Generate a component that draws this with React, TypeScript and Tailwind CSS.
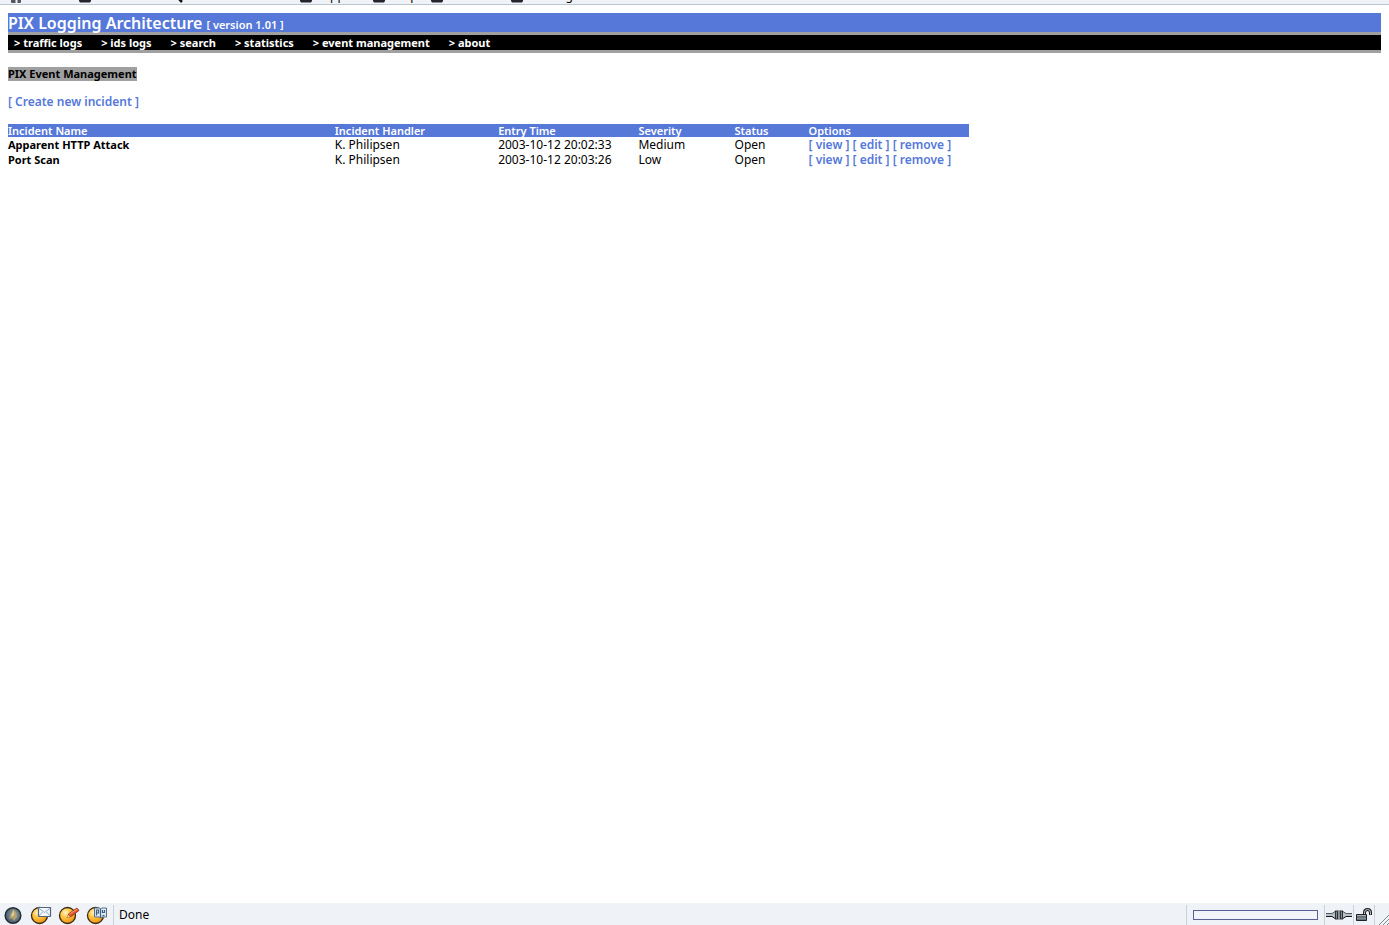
import { ReactNode } from 'react';

const bookmarks = [
  { label: 'Home', width: 'w-[69px]', icon: 'home' },
  { label: 'Bookmarks', width: 'w-[95px]', icon: 'folder' },
  { label: 'Red Hat Network', width: 'w-[126px]', icon: 'search' },
  { label: 'Support', width: 'w-[73px]', icon: 'folder' },
  { label: 'Shop', width: 'w-[58px]', icon: 'folder' },
  { label: 'Products', width: 'w-[80px]', icon: 'folder' },
  { label: 'Training', width: 'w-[80px]', icon: 'folder' },
];

const menu = ['traffic logs', 'ids logs', 'search', 'statistics', 'event management', 'about'];

const columns = [
  { name: 'Incident Name', width: 'w-[34%]' },
  { name: 'Incident Handler', width: 'w-[17%]' },
  { name: 'Entry Time', width: 'w-[14.6%]' },
  { name: 'Severity', width: 'w-[10%]' },
  { name: 'Status', width: 'w-[7.7%]' },
  { name: 'Options', width: '' },
];

const incidents = [
  { name: 'Apparent HTTP Attack', handler: 'K. Philipsen', time: '2003-10-12 20:02:33', severity: 'Medium', status: 'Open' },
  { name: 'Port Scan', handler: 'K. Philipsen', time: '2003-10-12 20:03:26', severity: 'Low', status: 'Open' },
];

function BookmarkIcon({ kind }: { kind: string }) {
  return (
    <svg viewBox="0 0 16 16" className="w-4 h-4 shrink-0" aria-hidden="true">
      {kind === 'home' && <path d="M1 9 8 2l7 7h-2v5.500l-1 .5H9.500V12h-2v3H4l-1-.5V9z" fill="#555564" />}
      {kind === 'search' && (
        <>
          <circle cx="3.500" cy="7" r="3" fill="none" stroke="#333" strokeWidth="2" />
          <path d="m5 9 5 5" stroke="#111" strokeWidth="2.500" />
        </>
      )}
      {kind === 'folder' && <path d="M2 3h5l2 2h5v8l-1 1.500H3L2 13z" fill="#24242e" />}
    </svg>
  );
}

function Ball({ children }: { children?: ReactNode }) {
  return (
    <svg viewBox="0 0 22 20" className="w-[22px] h-5" aria-hidden="true">
      <defs>
        <radialGradient id="ball" cx="38%" cy="32%" r="75%">
          <stop offset="0" stopColor="#fff6c8" />
          <stop offset="0.4" stopColor="#ffc640" />
          <stop offset="1" stopColor="#ee8a0c" />
        </radialGradient>
      </defs>
      <circle cx="9.500" cy="10.500" r="8" fill="url(#ball)" stroke="#3b2a18" strokeWidth="1.300" />
      {children}
    </svg>
  );
}

function NavigatorIcon() {
  return (
    <svg viewBox="0 0 22 20" className="w-[22px] h-5" aria-hidden="true">
      <defs>
        <radialGradient id="globe" cx="55%" cy="45%" r="60%">
          <stop offset="0" stopColor="#b3ab8d" />
          <stop offset="0.5" stopColor="#6c7f87" />
          <stop offset="1" stopColor="#3a5068" />
        </radialGradient>
      </defs>
      <circle cx="11" cy="10.500" r="7.800" fill="url(#globe)" stroke="#252c34" strokeWidth="1.500" />
      <path d="m11 4 3 3 1 5-3 4-2-3-3 1 2-5z" fill="#c9a662" opacity="0.700" />
      <path d="m11.500 5 .5 5-3 2z" fill="#efe3bc" opacity="0.800" />
    </svg>
  );
}

function MailIcon() {
  return (
    <Ball>
      <path d="M8.500 2.500h12v9h-12z" fill="#f2f7fc" stroke="#50657d" strokeWidth="1.200" />
      <path d="m8.500 3 6 4.500 6-4.500M8.500 11.500l4-4.500M20.500 11.500l-4-4.500" fill="none" stroke="#8ea1b8" strokeWidth="0.900" />
    </Ball>
  );
}

function ComposerIcon() {
  return (
    <Ball>
      <path d="m9 12.500 2-4 8-5.500 2 2.500-8 6z" fill="#e5532a" stroke="#80311f" strokeWidth="0.800" />
      <path d="m9 12.500 1-2.500 2 2z" fill="#fbe3b5" />
      <path d="m11.500 9 8-5" stroke="#ffa06e" />
    </Ball>
  );
}

function AddressBookIcon() {
  return (
    <Ball>
      <path d="M8.500 3h5l1 1 1-1h5v9h-5l-1 1-1-1h-5z" fill="#dce8f2" stroke="#55708c" />
      <path d="M10.500 10.500V5h2v3h-2M14.500 4v9M16.500 5v2.500h2V5M16.500 10.500h2" fill="none" stroke="#3f6080" strokeWidth="1.200" />
    </Ball>
  );
}

function PlugIcon() {
  return (
    <svg viewBox="0 0 26 12" className="w-[26px] h-3" aria-hidden="true">
      <path d="M0 4.500h6l3-2h8l3 2h6v3h-6l-3 2H9l-3-2H0z" fill="#b9c0c5" />
      <path d="M0 4.500h6l3-2M26 4.500h-6l-3-2" fill="none" stroke="#555b61" />
      <path d="M0 7.500h6l3 2M26 7.500h-6l-3 2" fill="none" stroke="#15181b" />
      <path d="M9 1.500h8v9H9z" fill="#2c3136" />
      <path d="M13 1.500v9" stroke="#eef2f5" />
      <path d="M10.500 2.500v7M15.500 2.500v7" stroke="#858d94" />
    </svg>
  );
}

function PadlockIcon() {
  return (
    <svg viewBox="0 0 16 14" className="w-4 h-3.5" aria-hidden="true">
      <path d="M8.500 7V4.500q0-3 3-3t3 3V7" fill="none" stroke="#222" strokeWidth="3" />
      <path d="M8.500 7V4.500q0-3 3-3t3 3v2" fill="none" stroke="#c5ccd2" />
      <path d="M.5 6.500h10v6H.5z" fill="#6b737b" stroke="#1d2126" />
      <path d="M1 7.500h9" stroke="#a9b1b8" />
      <path d="M1 10.500h9" stroke="#858d95" />
    </svg>
  );
}

function Divider() {
  return <div className="w-px self-stretch bg-[#c9d2da]" />;
}

function OptionLink({ label }: { label: string }) {
  return (
    <a href="#" className="font-semibold text-[#5578d9]">
      [ {label} ]
    </a>
  );
}

export default function App() {
  return (
    <div className="flex flex-col min-h-screen bg-white text-black text-[12px] font-['Noto_Sans',sans-serif]">
      {/* Personal toolbar, only its lower edge is in view */}
      <nav aria-label="Bookmarks" className="flex items-end h-[5px] overflow-hidden pl-2 bg-[#eff3f7] border-b border-[#b9c8ce]">
        {bookmarks.map((b) => (
          <a key={b.label} href="#" className={`flex items-end gap-0.5 shrink-0 whitespace-nowrap leading-4 ${b.width}`}>
            <BookmarkIcon kind={b.icon} />
            {b.label}
          </a>
        ))}
      </nav>

      <main className="flex-1 p-2">
        <header>
          <div className="flex items-baseline gap-1 h-[19px] bg-[#5578d9] text-white">
            <span className="text-[16px] leading-5 font-semibold">PIX Logging Architecture</span>
            <span className="text-[11px] leading-5 font-semibold">[ version 1.01 ]</span>
          </div>
          <nav aria-label="Main" className="flex items-center gap-[19px] h-[21px] px-1.5 bg-black border-y-3 border-[#a0a0a0] text-white text-[11px] font-bold">
            {menu.map((item) => (
              <a key={item} href="#" className="leading-4">
                &gt; {item}
              </a>
            ))}
          </nav>
        </header>

        <h1 className="w-fit mt-3.5 bg-[#a0a0a0] text-[11px] leading-[14px] font-bold">PIX Event Management</h1>
        <p className="mt-3.5 leading-[14px]">
          <a href="#" className="font-semibold text-[#5578d9]">[ Create new incident ]</a>
        </p>

        <table className="w-[70%] mt-[15px] table-fixed text-left">
          <thead>
            <tr className="bg-[#5578d9] text-white text-[11px] leading-[13px]">
              {columns.map((c) => (
                <th key={c.name} className={`p-0 font-semibold ${c.width}`}>{c.name}</th>
              ))}
            </tr>
          </thead>
          <tbody>
            {incidents.map((row) => (
              <tr key={row.name} className="leading-[15px] whitespace-nowrap">
                <td className="text-[11px] font-bold">{row.name}</td>
                <td>{row.handler}</td>
                <td>{row.time}</td>
                <td>{row.severity}</td>
                <td>{row.status}</td>
                <td>
                  <OptionLink label="view" /> <OptionLink label="edit" /> <OptionLink label="remove" />
                </td>
              </tr>
            ))}
          </tbody>
        </table>
      </main>

      {/* Status bar */}
      <footer className="flex items-center h-[22px] pt-0.5 bg-[#eff3f7]">
        <div className="flex items-center gap-1.5 pl-0.5 pr-[5px]">
          <button type="button" aria-label="Navigator"><NavigatorIcon /></button>
          <button type="button" aria-label="Mail"><MailIcon /></button>
          <button type="button" aria-label="Composer"><ComposerIcon /></button>
          <button type="button" aria-label="Address book"><AddressBookIcon /></button>
        </div>
        <Divider />
        <span className="flex-1 pl-[5px] leading-5">Done</span>
        <Divider />
        <div className="w-[137px] px-1.5">
          <div role="progressbar" aria-label="Page load" className="h-2.5 border border-[#5a5f94] bg-[#f1f5fa]" />
        </div>
        <Divider />
        <div className="flex justify-center w-7"><PlugIcon /></div>
        <Divider />
        <div className="flex justify-center w-5"><PadlockIcon /></div>
        <Divider />
        <svg viewBox="0 0 14 20" className="w-3.5 h-5" aria-hidden="true">
          <path d="M4 20 14 10M8 20l6-6M12 20l2-2" stroke="#7d858c" />
          <path d="m5 20 9-9M9 20l5-5" stroke="#fff" strokeWidth="0.800" />
        </svg>
      </footer>
    </div>
  );
}
